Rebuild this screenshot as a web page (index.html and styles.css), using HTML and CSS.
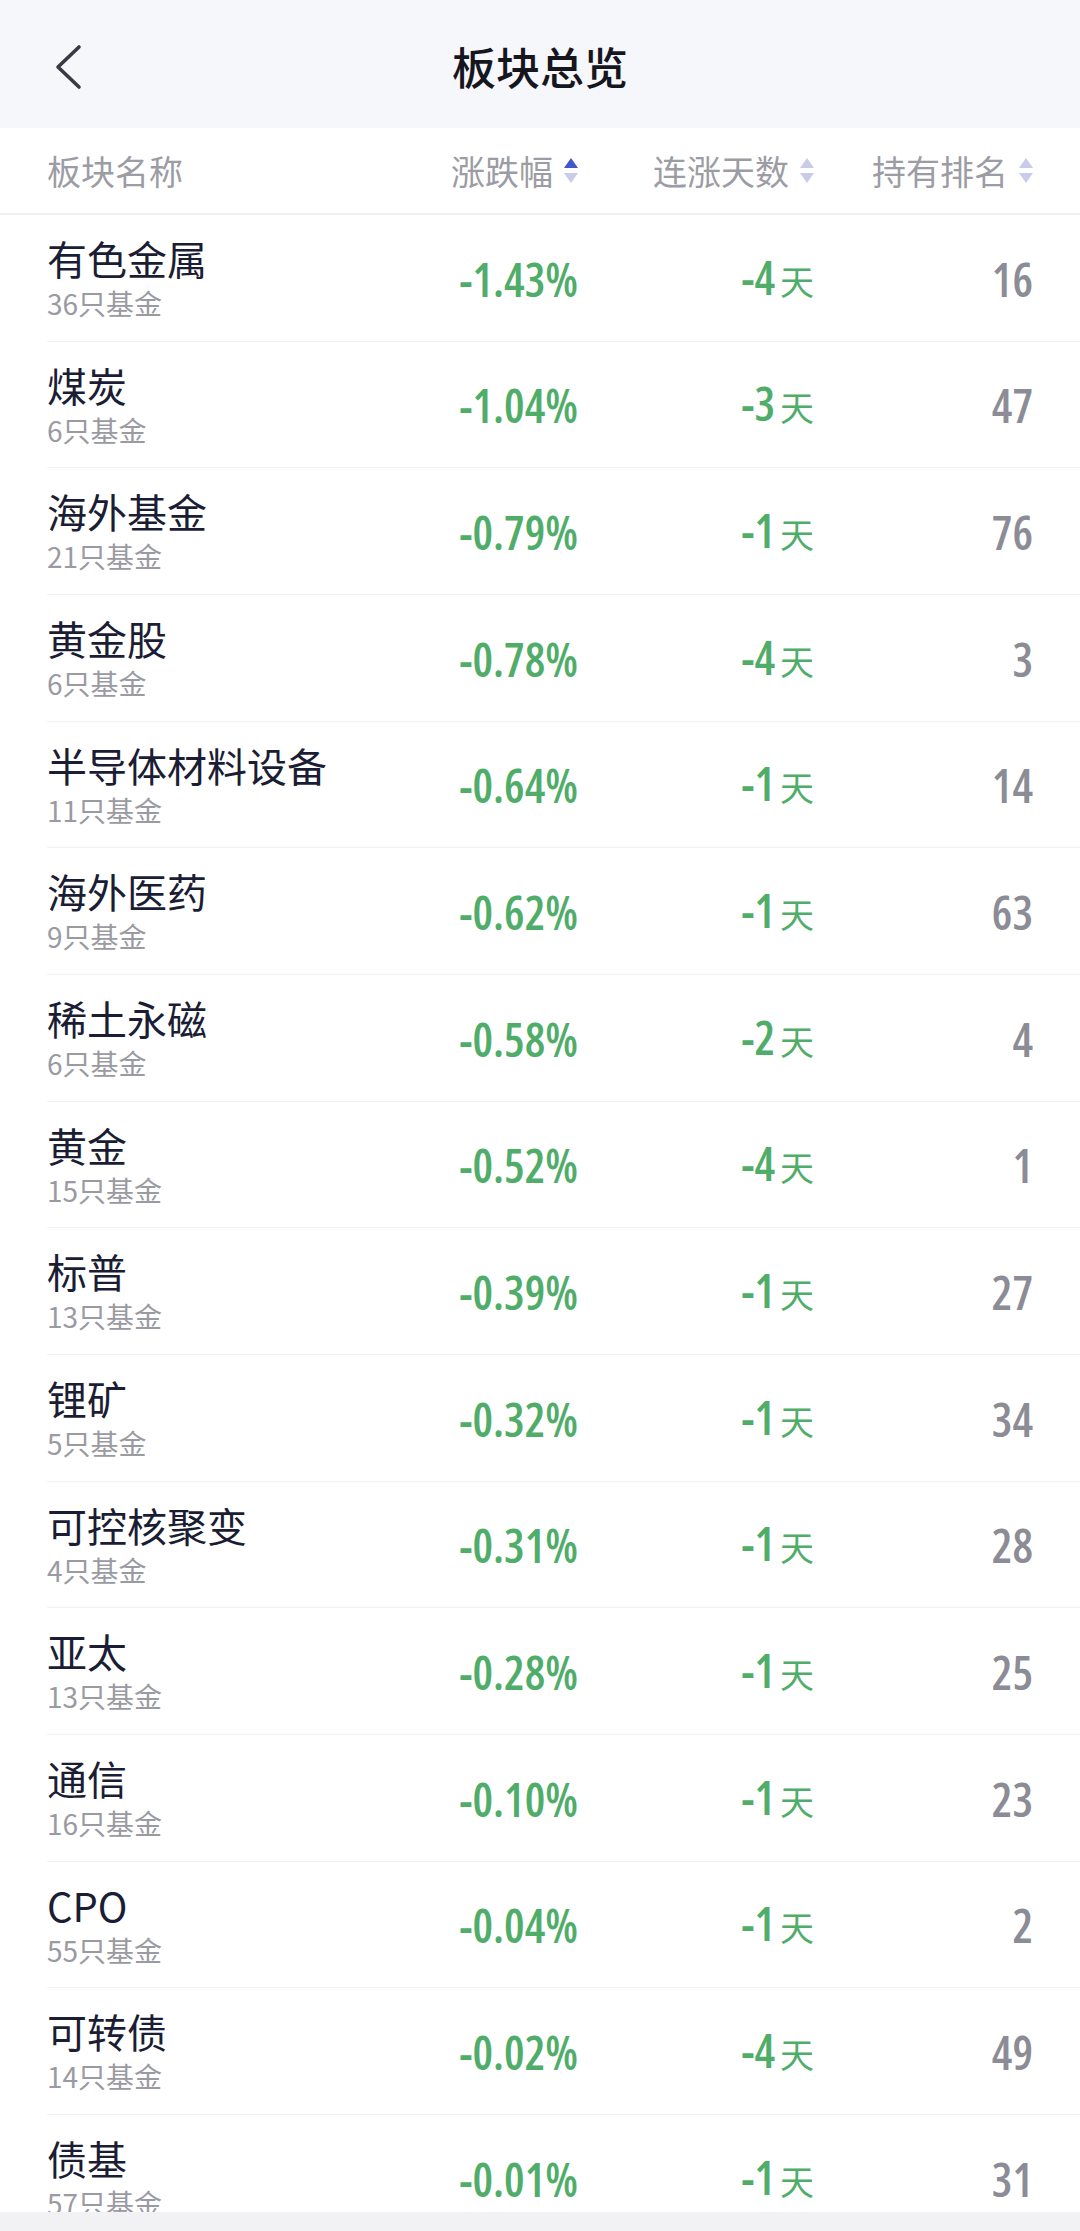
FILE: index.html
```html
<html>
    <head>
        <title>板块总览</title>
        <meta name="viewport" content="width=device-width, initial-scale=1.0">
        <link rel="stylesheet" href="styles.css">
    </head>
    <body>
        <div class="page">
            <div class="nav">
                <div class="back">
                    <svg width="34" height="50" viewBox="0 0 34 50">
                        <path d="M28 5 L7 25 L28 45" fill="none" stroke="#3a3a44" stroke-width="3.6" stroke-linecap="round" stroke-linejoin="round"/>
                    </svg>
                </div>
                <div class="title">板块总览</div>
                <div></div>
            </div>

            <div class="thead">
                <div class="th th-name">板块名称</div>
                <div class="th">涨跌幅
                    <svg class="sort" width="18" height="30" viewBox="0 0 18 30">
                        <path d="M9 2 L16 12 L2 12 Z" fill="#4256cc"/>
                        <path d="M2 17 L16 17 L9 27 Z" fill="#c9cbe8"/>
                    </svg>
                </div>
                <div class="th">连涨天数
                    <svg class="sort" width="18" height="30" viewBox="0 0 18 30">
                        <path d="M9 2 L16 12 L2 12 Z" fill="#c9cbe8"/>
                        <path d="M2 17 L16 17 L9 27 Z" fill="#c9cbe8"/>
                    </svg>
                </div>
                <div class="th">持有排名
                    <svg class="sort" width="18" height="30" viewBox="0 0 18 30">
                        <path d="M9 2 L16 12 L2 12 Z" fill="#c9cbe8"/>
                        <path d="M2 17 L16 17 L9 27 Z" fill="#c9cbe8"/>
                    </svg>
                </div>
            </div>

            <ul class="list" id="list"></ul>

            <div class="sysbar"></div>
        </div>
        <script>
            const sectors = [
              ['有色金属', 36, '-1.43%', '-4', 16],
              ['煤炭', 6, '-1.04%', '-3', 47],
              ['海外基金', 21, '-0.79%', '-1', 76],
              ['黄金股', 6, '-0.78%', '-4', 3],
              ['半导体材料设备', 11, '-0.64%', '-1', 14],
              ['海外医药', 9, '-0.62%', '-1', 63],
              ['稀土永磁', 6, '-0.58%', '-2', 4],
              ['黄金', 15, '-0.52%', '-4', 1],
              ['标普', 13, '-0.39%', '-1', 27],
              ['锂矿', 5, '-0.32%', '-1', 34],
              ['可控核聚变', 4, '-0.31%', '-1', 28],
              ['亚太', 13, '-0.28%', '-1', 25],
              ['通信', 16, '-0.10%', '-1', 23],
              ['CPO', 55, '-0.04%', '-1', 2],
              ['可转债', 14, '-0.02%', '-4', 49],
              ['债基', 57, '-0.01%', '-1', 31],
            ];

            const list = document.getElementById('list');
            list.innerHTML = sectors.map(([name, count, pct, days, rank]) => `
                <li class="row">
                    <div class="name-cell">
                        <div class="name">${name}</div>
                        <div class="count">${count}只基金</div>
                    </div>
                    <div class="cell pct">${pct}</div>
                    <div class="cell days">${days}<span class="unit">天</span></div>
                    <div class="cell rank">${rank}</div>
                </li>
            `).join('');
        </script>
    </body>
</html>
```

FILE: styles.css
```css
* {
    box-sizing: border-box;
    font-family: "Noto Sans CJK SC", "Noto Sans", sans-serif;
}

html, body {
    margin: 0;
    padding: 0;
    background: #ffffff;
}

.page {
    width: 1080px;
    height: 2231px;
    display: flex;
    flex-direction: column;
    overflow: hidden;
}

.nav {
    height: 128px;
    flex-shrink: 0;
    background: #f6f7fb;
    display: grid;
    grid-template-columns: 200px 1fr 200px;
    align-items: center;
}

.back {
    padding-left: 51px;
    padding-top: 6px;
    display: flex;
}

.title {
    text-align: center;
    font-size: 44px;
    font-weight: 500;
    color: #16161e;
    padding-top: 4px;
}

.thead {
    height: 87px;
    flex-shrink: 0;
    padding: 0 45px 0 47px;
    display: grid;
    grid-template-columns: 1fr 162px 236px 219px;
    align-items: center;
    border-bottom: 2px solid #efeff2;
}

.th {
    display: flex;
    align-items: center;
    justify-content: flex-end;
    gap: 9px;
    font-size: 34px;
    color: #9c9ca4;
}

.th-name {
    justify-content: flex-start;
}

.list {
    flex: 1;
    overflow: hidden;
    list-style: none;
    margin: 0;
    padding: 0;
}

.row {
    height: 126.67px;
    margin-left: 47px;
    padding-right: 47px;
    display: grid;
    grid-template-columns: 1fr 160px 236px 219px;
    align-items: center;
    border-bottom: 1px solid #f1f1f3;
}

.name-cell {
    align-self: start;
    padding-top: 17px;
}

.name {
    font-size: 40px;
    line-height: 52px;
    color: #1a1d33;
}

.count {
    margin-top: 1px;
    font-size: 28px;
    line-height: 36px;
    color: #9a9aa2;
}

/* condensed digits, close to the app's DIN face */
.cell {
    text-align: right;
    font-family: "Open Sans", sans-serif;
    font-weight: 600;
    font-stretch: 75%;
    font-size: 46px;
    line-height: 56px;
    padding-top: 2px;
}

.pct, .days {
    color: #4fad69;
}

.rank {
    color: #8c8c96;
}

.unit {
    font-family: "Noto Sans CJK SC", sans-serif;
    font-weight: 400;
    font-size: 34px;
    margin-left: 5px;
}

.sysbar {
    height: 19px;
    flex-shrink: 0;
    background: #f2f2f4;
}
```
